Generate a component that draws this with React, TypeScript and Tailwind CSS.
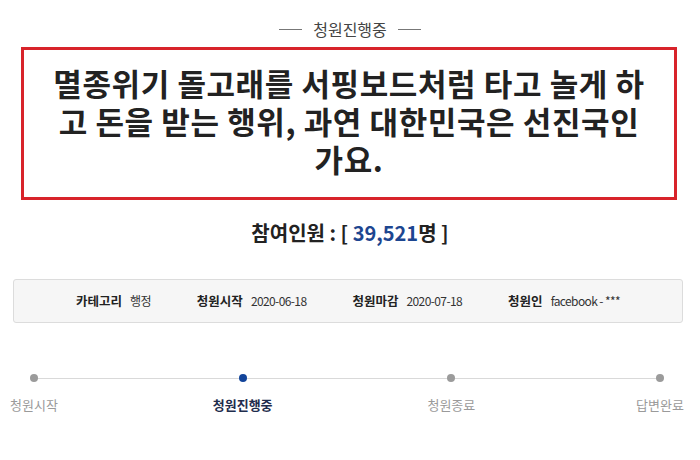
const steps = [
  { label: "청원시작", active: false },
  { label: "청원진행중", active: true },
  { label: "청원종료", active: false },
  { label: "답변완료", active: false },
];

const info = [
  { key: "카테고리", value: "행정" },
  { key: "청원시작", value: "2020-06-18" },
  { key: "청원마감", value: "2020-07-18" },
  { key: "청원인", value: "facebook - ***" },
];

function App() {
  return (
    <div className="w-[700px] h-[460px] bg-white overflow-hidden font-['Noto_Sans_CJK_KR','Noto_Sans',sans-serif] flex flex-col">
      <div className="pt-[19px] flex items-center justify-center gap-[11px] text-[16px] leading-[20px] text-[#444]">
        <span className="w-[23px] h-px bg-[#777]" />
        <span>청원진행중</span>
        <span className="w-[23px] h-px bg-[#777]" />
      </div>

      <div className="mt-[8px] ml-[21px] w-[656px] h-[153px] border-[3px] border-[#d8232a] pb-[5px] flex items-center justify-center">
        <h1 className="w-[600px] text-center text-[31px] leading-[38px] font-bold text-[#222] tracking-[0.6px]">
          멸종위기 돌고래를 서핑보드처럼 타고 놀게 하고 돈을 받는 행위, 과연 대한민국은 선진국인가요.
        </h1>
      </div>

      <div className="mt-[20px] text-center text-[20px] leading-[26px] font-bold text-[#222]">
        참여인원 : [ <span className="text-[#1d4690]">39,521</span>명 ]
      </div>

      <div className="mt-[33px] ml-[13px] w-[670px] h-[44px] bg-[#f6f6f6] border border-[#dcdcdc] rounded-[3px] flex items-center justify-center gap-[46px] text-[12px] text-[#333]">
        {info.map((i) => (
          <div key={i.key} className="flex items-center gap-[8px]">
            <span className="font-bold text-[#222] text-[12.5px]">{i.key}</span>
            <span className="tracking-[-0.6px]">{i.value}</span>
          </div>
        ))}
      </div>

      <div className="mt-[51px] mx-[34px] w-[626px] flex items-start">
        {steps.map((s, idx) => (
          <div key={s.label} className="contents">
            {idx > 0 && <div className="flex-1 h-px bg-[#d9d9d9] mt-[4px]" />}
            <div className="w-0 flex flex-col items-center">
              <span
                className={
                  s.active
                    ? "relative z-10 w-[8px] h-[8px] rounded-full bg-[#12449a] shrink-0"
                    : "relative z-10 w-[8px] h-[8px] rounded-full bg-[#9b9b9b] shrink-0"
                }
              />
              <span
                className={
                  s.active
                    ? "mt-[14px] whitespace-nowrap text-[13px] leading-[17px] font-bold text-[#1f2d4d]"
                    : "mt-[14px] whitespace-nowrap text-[13px] leading-[17px] text-[#9a9a9a]"
                }
              >
                {s.label}
              </span>
            </div>
          </div>
        ))}
      </div>
    </div>
  );
}

export default App;
